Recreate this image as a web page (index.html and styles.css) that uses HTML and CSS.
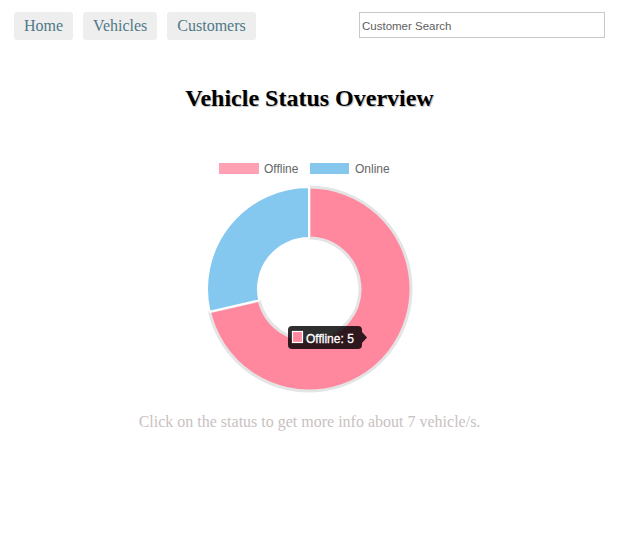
FILE: index.html
```html
<!DOCTYPE html>
<html>
<head>
<meta charset="utf-8">
<link rel="stylesheet" href="styles.css">
</head>
<body>
<header class="topbar">
  <nav class="nav">
    <a href="#" class="nav-btn">Home</a>
    <a href="#" class="nav-btn">Vehicles</a>
    <a href="#" class="nav-btn">Customers</a>
  </nav>
  <input class="search" type="text" placeholder="Customer Search">
</header>
<main class="content">
  <h2 class="title">Vehicle Status Overview</h2>
  <svg class="chart" width="220" height="245" viewBox="1 0 220 245">
    <rect x="20" y="8" width="40" height="11" fill="#ffa1b5"/>
    <text class="legend-text" x="65" y="18">Offline</text>
    <rect x="111" y="8" width="39" height="11" fill="#86c7ee"/>
    <text class="legend-text" x="156" y="18">Online</text>
    <path d="M110 32 A102 102 0 1 1 10.56 156.70 L60.28 145.35 A51 51 0 1 0 110 83 Z" fill="#ff889f" stroke="#e4e4e4" stroke-width="3" stroke-linejoin="round"/>
    <path d="M10.56 156.70 A102 102 0 0 1 110 32 L110 83 A51 51 0 0 0 60.28 145.35 Z" fill="#85c8ef" stroke="#ffffff" stroke-width="2"/>
    <rect x="89" y="171" width="74" height="23" rx="4" fill="rgba(0,0,0,0.82)"/>
    <path d="M163 177 L168 182.5 L163 188 Z" fill="rgba(0,0,0,0.82)"/>
    <rect x="93.5" y="176.5" width="10" height="11" fill="#ff889f" stroke="#ffffff" stroke-width="1.2"/>
    <text class="tip-text" x="107" y="187.5">Offline: 5</text>
  </svg>
  <p class="info">Click on the status to get more info about 7 vehicle/s.</p>
</main>
</body>
</html>
```
FILE: styles.css
```css
body {
  margin: 0;
  font-family: "Liberation Serif", "Times New Roman", serif;
  background: #ffffff;
}

.topbar {
  display: flex;
  justify-content: space-between;
  align-items: flex-start;
  padding: 12px 31px 0 14px;
}

.nav {
  display: flex;
  gap: 10px;
}

.nav-btn {
  display: block;
  background: #eeeeee;
  border-radius: 3px;
  padding: 5px 10px;
  font-size: 16px;
  line-height: 18px;
  color: #4f7987;
  text-decoration: none;
}

.search {
  box-sizing: border-box;
  width: 246px;
  height: 26px;
  margin: 0;
  border: 1px solid #c8c8c8;
  padding: 1px 2px 0;
  font-family: "Liberation Sans", Arial, sans-serif;
  font-size: 11.5px;
  color: #333;
  outline: none;
}

.search::placeholder {
  color: #5e5e5e;
}

.content {
  margin: 0 31px 0 14px;
  text-align: center;
}

.title {
  margin: 45px 0 0;
  font-size: 24px;
  font-weight: bold;
  color: #000;
  text-shadow: 1px 1px 1px rgba(0, 0, 0, 0.25);
}

.chart {
  display: block;
  margin: 43px auto 0;
}

.legend-text {
  font-family: "Liberation Sans", Arial, sans-serif;
  font-size: 12px;
  fill: #666666;
}

.tip-text {
  font-family: "Liberation Sans", Arial, sans-serif;
  font-size: 12px;
  fill: #ffffff;
  stroke: #ffffff;
  stroke-width: 0.3px;
}

.info {
  margin: 13px 0 0;
  font-size: 16px;
  color: #c9c1c1;
}
```
